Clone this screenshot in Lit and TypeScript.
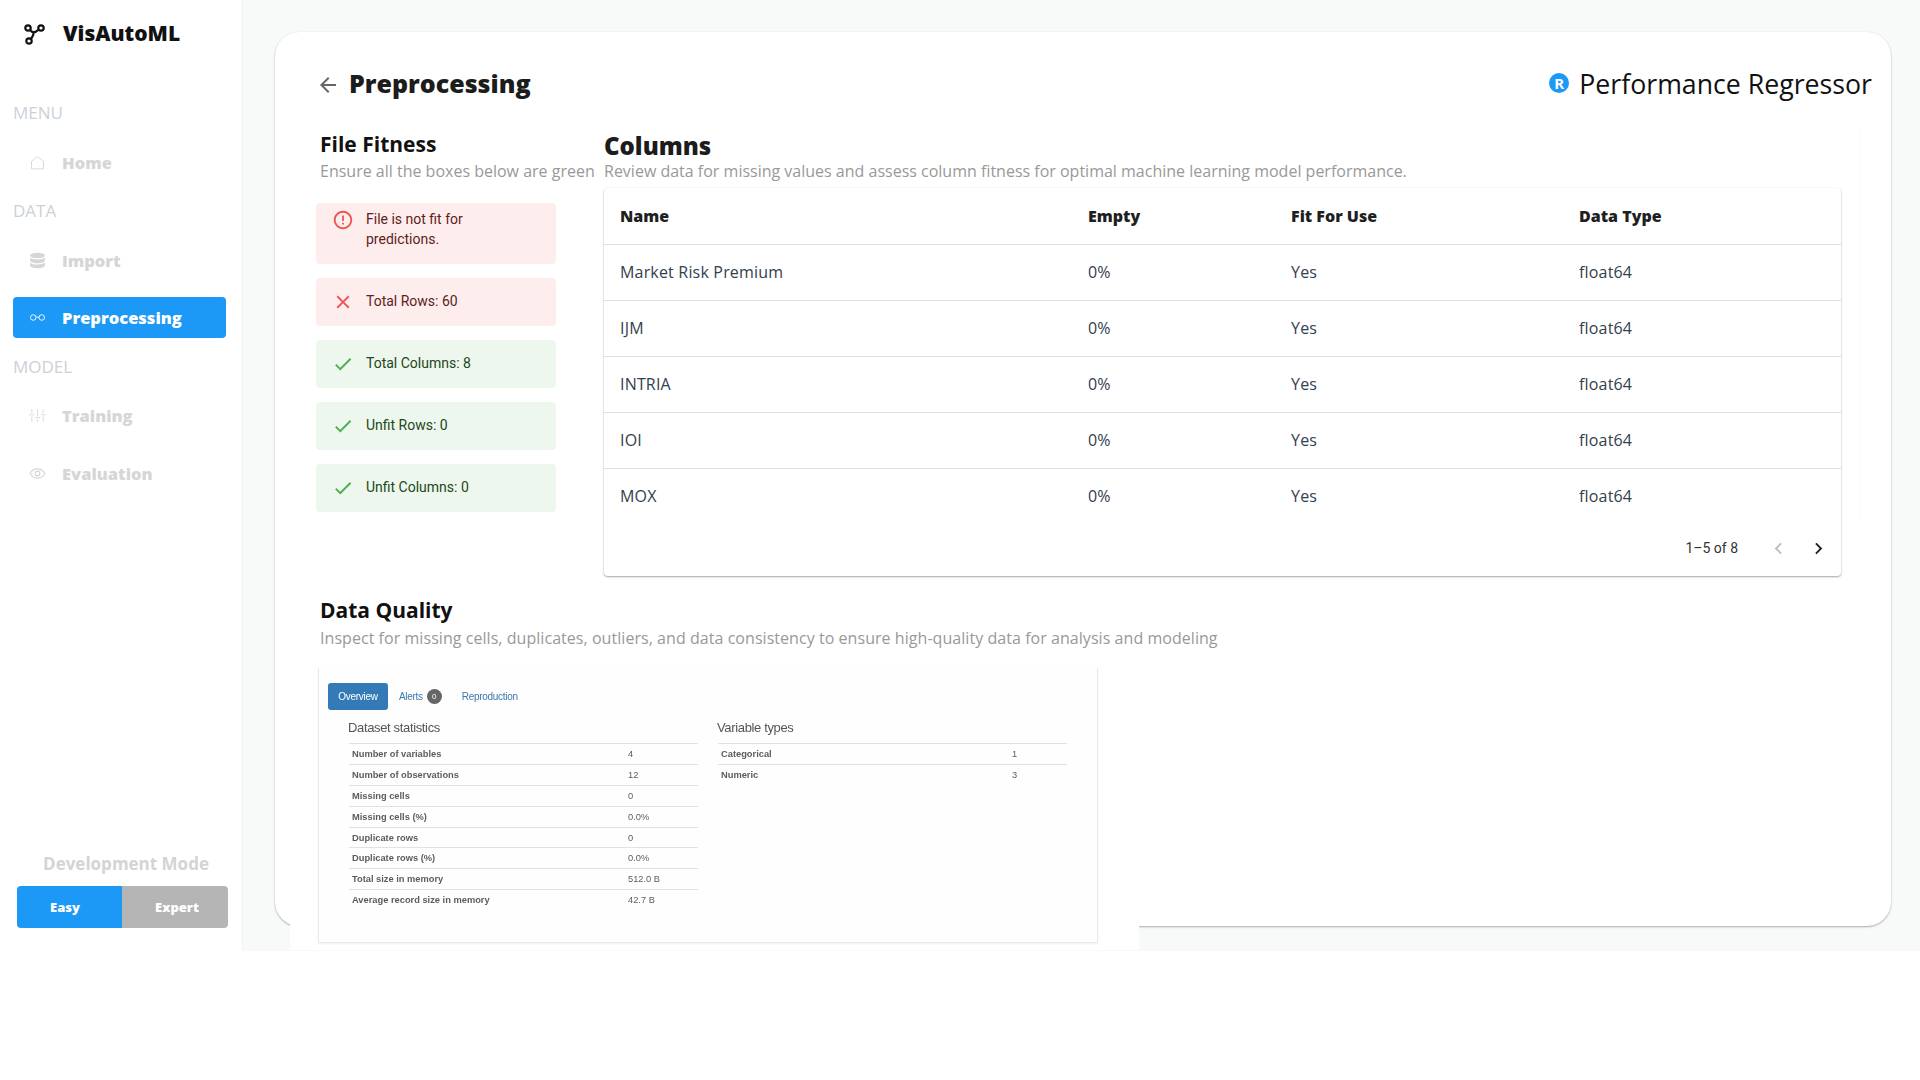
import { LitElement, html, css, svg } from 'lit';
import { customElement } from 'lit/decorators.js';

const icons = {
  logo: svg`<g fill="none" stroke="currentColor" stroke-width="2.200"><circle cx="5" cy="7" r="2.700"/><circle cx="18" cy="7" r="2.700"/><circle cx="6" cy="20" r="2.700"/><path d="M7 9c1 1.200 2.200 2 3.500 2.400 1.800-.2 3.600-1.200 5-2.600M10.500 11.400c.3 2-.8 4.200-2.600 6.600"/></g>`,
  home: svg`<path d="M3.500 10.500 12 3.500l8.500 7V21h-17z" fill="none" stroke="currentColor" stroke-width="1.300" stroke-linejoin="round"/>`,
  database: svg`<path fill="currentColor" d="M12 1c5.800 0 10.500 1.600 10.500 3.800S17.800 8.600 12 8.600 1.500 7 1.500 4.800 6.200 1 12 1zM1.500 7.800C3.500 9.600 7.300 10.600 12 10.600s8.500-1 10.500-2.800v4.200c0 2.200-4.700 3.800-10.500 3.800S1.500 14.200 1.500 12zM1.500 15c2 1.800 5.800 2.800 10.500 2.800s8.500-1 10.500-2.800v4.200c0 2.200-4.700 3.800-10.500 3.800S1.500 21.400 1.500 19.200z"/>`,
  glasses: svg`<g fill="none" stroke="currentColor" stroke-width="1.300"><circle cx="6" cy="12" r="3.900"/><circle cx="18" cy="12" r="3.900"/><path d="M9.900 11.500h4.200"/></g>`,
  sliders: svg`<path fill="none" stroke="currentColor" stroke-width="1.200" d="M4 3v6M4 13v8M12 3v10M12 17v4M20 3v6M20 13v8M.5 11h7M8.500 15h7M16.500 11h7"/>`,
  eye: svg`<g fill="none" stroke="currentColor" stroke-width="1.600"><path d="M1.500 12C4 7.500 7.700 5.500 12 5.500s8 2 10.500 6.500C20 16.500 16.300 18.500 12 18.500S4 16.500 1.500 12z"/><circle cx="12" cy="12" r="3.300"/></g>`,
  back: svg`<path fill="currentColor" d="M20 11H7.830l5.590-5.590L12 4l-8 8 8 8 1.410-1.410L7.830 13H20z"/>`,
  error: svg`<path fill="currentColor" d="M11 15h2v2h-2zm0-8h2v6h-2zm.99-5C6.470 2 2 6.480 2 12s4.470 10 9.990 10C17.520 22 22 17.520 22 12S17.520 2 11.990 2zM12 20c-4.420 0-8-3.580-8-8s3.580-8 8-8 8 3.580 8 8-3.580 8-8 8z"/>`,
  close: svg`<path fill="currentColor" d="M19 6.410 17.590 5 12 10.590 6.410 5 5 6.410 10.590 12 5 17.590 6.410 19 12 13.410 17.590 19 19 17.590 13.410 12z"/>`,
  check: svg`<path fill="currentColor" d="M9 16.170 4.830 12l-1.420 1.410L9 19 21 7l-1.410-1.410z"/>`,
  prev: svg`<path fill="currentColor" d="M15.410 7.410 14 6l-6 6 6 6 1.410-1.410L10.830 12z"/>`,
  next: svg`<path fill="currentColor" d="M10 6 8.590 7.410 13.170 12l-4.580 4.590L10 18l6-6z"/>`,
};

const icon = (name: keyof typeof icons, cls = '') =>
  html`<svg class=${cls} viewBox="0 0 24 24" aria-hidden="true">${icons[name]}</svg>`;

const columns = ['Market Risk Premium', 'IJM', 'INTRIA', 'IOI', 'MOX'];

const fitness = [
  { kind: 'bad', icon: 'close', text: 'Total Rows: 60' },
  { kind: 'good', icon: 'check', text: 'Total Columns: 8' },
  { kind: 'good', icon: 'check', text: 'Unfit Rows: 0' },
  { kind: 'good', icon: 'check', text: 'Unfit Columns: 0' },
] as const;

const stats = [
  ['Number of variables', '4'],
  ['Number of observations', '12'],
  ['Missing cells', '0'],
  ['Missing cells (%)', '0.0%'],
  ['Duplicate rows', '0'],
  ['Duplicate rows (%)', '0.0%'],
  ['Total size in memory', '512.0 B'],
  ['Average record size in memory', '42.7 B'],
];

const varTypes = [
  ['Categorical', '1'],
  ['Numeric', '3'],
];

@customElement('app-sidebar')
export class AppSidebar extends LitElement {
  static styles = css`
    :host {
      display: flex;
      flex-direction: column;
      width: 243px;
      flex: none;
      box-sizing: border-box;
      background: #fff;
      border-right: 1px solid #f1f2f2;
      font-family: 'Open Sans', sans-serif;
      padding: 0 16px 23px 13px;
    }
    .brand {
      display: flex;
      align-items: center;
      height: 66px;
      margin-bottom: 35px;
      font-size: 21px;
      font-weight: 800;
      color: #111;
    }
    .brand svg {
      width: 24px;
      height: 24px;
      margin: 0 16px 0 10px;
    }
    nav {
      display: flex;
      flex-direction: column;
      gap: 16.5px;
    }
    .label {
      font-size: 17px;
      line-height: 24px;
      color: #ccd1d7;
    }
    .item {
      display: flex;
      align-items: center;
      height: 41px;
      border-radius: 4px;
      padding-left: 16px;
      font-size: 16.500px;
      font-weight: 800;
      color: #d6d6d6;
    }
    .item svg {
      width: 17px;
      height: 17px;
      margin-right: 16px;
    }
    .item.active {
      background: #1c98f7;
      color: #fff;
    }
    .mode {
      margin-top: auto;
      padding-left: 4px;
    }
    .mode-title {
      text-align: center;
      font-size: 17px;
      font-weight: 700;
      line-height: 24px;
      color: #d4d4d4;
      margin-bottom: 10px;
      padding-left: 9px;
    }
    .toggle {
      display: flex;
      width: 211px;
      height: 42px;
      border-radius: 4px;
      overflow: hidden;
      font-size: 13px;
      font-weight: 800;
      color: #fff;
    }
    .toggle div {
      display: flex;
      align-items: center;
      justify-content: center;
    }
    .easy {
      width: 105px;
      background: #1c98f7;
      padding-right: 9px;
      box-sizing: border-box;
    }
    .expert {
      flex: 1;
      background: #b5b5b5;
      padding-left: 4px;
    }
  `;

  render() {
    return html`
      <div class="brand">${icon('logo')}VisAutoML</div>
      <nav>
        <div class="label">MENU</div>
        <div class="item">${icon('home')}Home</div>
        <div class="label">DATA</div>
        <div class="item">${icon('database')}Import</div>
        <div class="item active">${icon('glasses')}Preprocessing</div>
        <div class="label">MODEL</div>
        <div class="item">${icon('sliders')}Training</div>
        <div class="item">${icon('eye')}Evaluation</div>
      </nav>
      <div class="mode">
        <div class="mode-title">Development Mode</div>
        <div class="toggle">
          <div class="easy">Easy</div>
          <div class="expert">Expert</div>
        </div>
      </div>
    `;
  }
}

@customElement('app-report-preview')
export class AppReportPreview extends LitElement {
  static styles = css`
    :host {
      display: block;
      width: 780px;
      height: 275px;
      box-sizing: border-box;
      background: #fefefe;
      border: 1px solid #e9e9e9;
      border-top: none;
      box-shadow: 0 1px 2px rgba(0, 0, 0, 0.06);
      padding: 15px 0 0 9px;
      font-family: 'Liberation Sans', sans-serif;
      color: #4a4a4a;
    }
    .blur {
      filter: blur(0.7px);
    }
    .tabs {
      display: flex;
      align-items: center;
      height: 27px;
      font-size: 10px;
      letter-spacing: -0.3px;
      color: #3b78ad;
    }
    .tab-on {
      width: 60px;
      height: 27px;
      display: flex;
      align-items: center;
      justify-content: center;
      background: #337ab7;
      border-radius: 3px;
      color: #fff;
      margin-right: 11px;
    }
    .badge {
      width: 15px;
      height: 15px;
      border-radius: 50%;
      background: #666;
      color: #fff;
      font-size: 8px;
      line-height: 15px;
      text-align: center;
      margin: 0 20px 0 4px;
      letter-spacing: 0;
    }
    .cols {
      display: flex;
      gap: 20px;
      padding-left: 21px;
      margin-top: 10px;
    }
    .col {
      width: 349px;
    }
    .col-title {
      margin-left: -1px;
      font-size: 13px;
      line-height: 16px;
      letter-spacing: -0.35px;
      color: #555;
      margin-bottom: 7px;
    }
    .row {
      display: flex;
      height: 20.900px;
      align-items: center;
      box-sizing: border-box;
      border-top: 1px solid #e2e2e2;
      padding-left: 3px;
      font-size: 9.300px;
      font-weight: 700;
      color: #5c5c5c;
    }
    .row span:first-child {
      width: 276px;
    }
    .col.wide .row span:first-child {
      width: 291px;
    }
    .row span:last-child {
      font-weight: 400;
    }
  `;

  private table(title: string, rows: string[][], wide = false) {
    return html`
      <div class="col ${wide ? 'wide' : ''}">
        <div class="col-title">${title}</div>
        ${rows.map(([k, v]) => html`<div class="row"><span>${k}</span><span>${v}</span></div>`)}
      </div>
    `;
  }

  render() {
    return html`
      <div class="blur">
        <div class="tabs">
          <div class="tab-on">Overview</div>
          <span>Alerts</span>
          <span class="badge">0</span>
          <span>Reproduction</span>
        </div>
        <div class="cols">
          ${this.table('Dataset statistics', stats)} ${this.table('Variable types', varTypes, true)}
        </div>
      </div>
    `;
  }
}

@customElement('app-root')
export class AppRoot extends LitElement {
  static styles = css`
    :host {
      display: block;
      font-family: 'Open Sans', sans-serif;
    }
    .app {
      display: flex;
      height: 951px;
    }
    main {
      flex: 1;
      min-width: 0;
      background: #f8f9f9;
      padding: 32px 29px 0 32px;
    }
    .card {
      height: 894px;
      box-sizing: border-box;
      background: #fff;
      border-radius: 24px;
      box-shadow: 0 1px 2px rgba(0, 0, 0, 0.3), 0 0 1px rgba(0, 0, 0, 0.08);
      padding: 31px 19px 0 45px;
    }
    header {
      display: flex;
      align-items: center;
      justify-content: space-between;
      height: 40px;
    }
    .page-title {
      display: flex;
      align-items: center;
      font-size: 25px;
      font-weight: 800;
      color: #1c1c1c;
    }
    .page-title svg {
      width: 24px;
      height: 24px;
      margin: 3px 9px 0 -4px;
      color: #666;
    }
    .model {
      display: flex;
      align-items: center;
      font-size: 26.700px;
      color: #111;
    }
    .model-badge {
      width: 20px;
      height: 20px;
      border-radius: 50%;
      background: #1c98f7;
      color: #fff;
      font-size: 15px;
      font-weight: 700;
      line-height: 20px;
      text-align: center;
      margin-right: 10px;
    }
    .top {
      display: flex;
      margin-top: 25px;
      height: 448px;
    }
    .fitness {
      width: 284px;
      flex: none;
    }
    h2 {
      margin: 0;
      font-size: 21px;
      line-height: 32px;
      font-weight: 700;
      color: #111;
    }
    .sub {
      font-size: 16px;
      line-height: 22px;
      color: #999;
      white-space: nowrap;
    }
    .alerts {
      display: flex;
      flex-direction: column;
      gap: 14px;
      width: 240px;
      margin: 21px 0 0 -4px;
    }
    .alert {
      display: flex;
      height: 48px;
      box-sizing: border-box;
      border-radius: 4px;
      padding: 13px 16px;
      font-family: Roboto, sans-serif;
      font-size: 14px;
      line-height: 20px;
    }
    .alert svg {
      width: 22px;
      height: 22px;
      flex: none;
      margin: 0 12px 0 0;
    }
    .alert.first {
      padding-top: 6px;
      height: 61px;
    }
    .alert.bad {
      background: #fdeded;
      color: #5f2120;
    }
    .alert.bad svg {
      color: #ef5350;
    }
    .alert.good {
      background: #edf7ed;
      color: #1e4620;
    }
    .alert.good svg {
      color: #4caf50;
    }
    .columns {
      box-sizing: border-box;
      width: 1257px;
      height: 394px;
      padding-right: 19px;
      border-right: 1px solid #fafafa;
    }
    .columns h2 {
      font-size: 24px;
      font-weight: 800;
      margin-top: 2px;
      color: #1c1c1c;
    }
    .columns .sub {
      margin-top: -2px;
    }
    .paper {
      margin-top: 6px;
      height: 388px;
      border-radius: 4px;
      background: #fff;
      box-shadow: 0 1px 2px rgba(0, 0, 0, 0.35), 0 0 2px rgba(0, 0, 0, 0.06);
    }
    table {
      width: 100%;
      table-layout: fixed;
      border-collapse: collapse;
      font-size: 16px;
      letter-spacing: 0.18px;
      color: #33404d;
    }
    th,
    td {
      height: 56px;
      box-sizing: border-box;
      padding: 0 16px;
      text-align: left;
      border-bottom: 1px solid #e0e0e0;
    }
    th {
      font-weight: 800;
      letter-spacing: 0;
      color: #1f1f1f;
    }
    tr:last-child td {
      border-bottom: none;
    }
    .pager {
      display: flex;
      align-items: center;
      justify-content: flex-end;
      height: 48px;
      padding-right: 11px;
      font-family: Roboto, sans-serif;
      font-size: 14px;
      color: #333;
    }
    .pager svg {
      width: 23px;
      height: 23px;
      color: #222;
    }
    .pager .range {
      margin-right: 29px;
    }
    .pager .off {
      color: #bdbdbd;
      margin-right: 17px;
    }
    .quality {
      margin-top: 18px;
    }
    .quality .sub {
      margin-top: 1px;
      letter-spacing: 0.05px;
    }
    .shot {
      width: 849px;
      height: 282px;
      box-sizing: border-box;
      margin: 19px 0 0 -30px;
      padding-left: 28px;
      background: #fff;
    }
  `;

  render() {
    return html`
      <div class="app">
        <app-sidebar></app-sidebar>
        <main>
          <div class="card">
            <header>
              <div class="page-title">${icon('back')}Preprocessing</div>
              <div class="model"><span class="model-badge">R</span>Performance Regressor</div>
            </header>
            <div class="top">
              <section class="fitness">
                <h2>File Fitness</h2>
                <div class="sub">Ensure all the boxes below are green</div>
                <div class="alerts">
                  <div class="alert bad first">
                    ${icon('error')}
                    <span>File is not fit for<br />predictions.</span>
                  </div>
                  ${fitness.map(
                    (a) => html`<div class="alert ${a.kind}">${icon(a.icon)}<span>${a.text}</span></div>`
                  )}
                </div>
              </section>
              <section class="columns">
                <h2>Columns</h2>
                <div class="sub">
                  Review data for missing values and assess column fitness for optimal machine learning
                  model performance.
                </div>
                <div class="paper">
                  <table>
                    <colgroup>
                      <col style="width:468px" />
                      <col style="width:203px" />
                      <col style="width:288px" />
                      <col />
                    </colgroup>
                    <thead>
                      <tr>
                        <th>Name</th>
                        <th>Empty</th>
                        <th>Fit For Use</th>
                        <th>Data Type</th>
                      </tr>
                    </thead>
                    <tbody>
                      ${columns.map(
                        (name) => html`<tr>
                          <td>${name}</td>
                          <td>0%</td>
                          <td>Yes</td>
                          <td>float64</td>
                        </tr>`
                      )}
                    </tbody>
                  </table>
                  <div class="pager">
                    <span class="range">1–5 of 8</span>
                    ${icon('prev', 'off')}${icon('next')}
                  </div>
                </div>
              </section>
            </div>
            <section class="quality">
              <h2>Data Quality</h2>
              <div class="sub">
                Inspect for missing cells, duplicates, outliers, and data consistency to ensure
                high-quality data for analysis and modeling
              </div>
              <div class="shot"><app-report-preview></app-report-preview></div>
            </section>
          </div>
        </main>
      </div>
    `;
  }
}
